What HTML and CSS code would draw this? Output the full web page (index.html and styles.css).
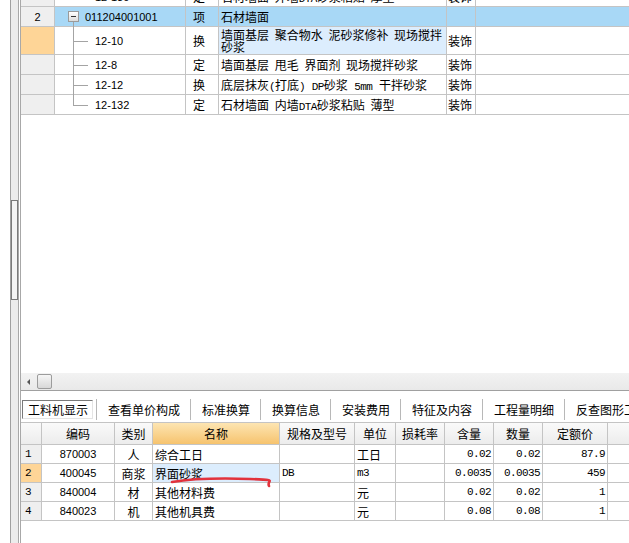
FILE: index.html
```html
<!DOCTYPE html>
<html lang="zh-CN">
<head>
<meta charset="utf-8">
<title>工料机显示</title>
<link rel="stylesheet" href="styles.css">
</head>
<body>
<div class="app">
  <div class="side">
    <div class="side-pad"></div>
    <div class="vscroll"><div class="vthumb"></div></div>
    <div class="side-gap"></div>
  </div>
  <div class="main">
    <div class="tgrid">
      <div class="tr partial">
        <div class="c num"></div>
        <div class="c code">12-130</div>
        <div class="c typ">定</div>
        <div class="c nm"><span class="t">石材墙面 外墙<span class="a">DTA</span>砂浆粘贴 厚型</span></div>
        <div class="c cat">装饰</div>
        <div class="c rest"></div>
      </div>
      <div class="tr item">
        <div class="c num">2</div>
        <div class="c code"><span class="tog"></span>011204001001</div>
        <div class="c typ">项</div>
        <div class="c nm"><span class="t">石材墙面</span></div>
        <div class="c cat"></div>
        <div class="c rest"></div>
      </div>
      <div class="tr child tall">
        <div class="c num cur"></div>
        <div class="c code">12-10</div>
        <div class="c typ">换</div>
        <div class="c nm wrap curcell"><span class="t">墙面基层 聚合物水 泥砂浆修补 现场搅拌<br>砂浆</span></div>
        <div class="c cat">装饰</div>
        <div class="c rest"></div>
      </div>
      <div class="tr child">
        <div class="c num"></div>
        <div class="c code">12-8</div>
        <div class="c typ">定</div>
        <div class="c nm"><span class="t">墙面基层 甩毛 界面剂 现场搅拌砂浆</span></div>
        <div class="c cat">装饰</div>
        <div class="c rest"></div>
      </div>
      <div class="tr child">
        <div class="c num"></div>
        <div class="c code">12-12</div>
        <div class="c typ">换</div>
        <div class="c nm"><span class="t">底层抹灰<span class="a">(</span>打底<span class="a">) DP</span>砂浆<span class="a"> 5mm </span>干拌砂浆</span></div>
        <div class="c cat">装饰</div>
        <div class="c rest"></div>
      </div>
      <div class="tr child last">
        <div class="c num"></div>
        <div class="c code">12-132</div>
        <div class="c typ">定</div>
        <div class="c nm"><span class="t">石材墙面 内墙<span class="a">DTA</span>砂浆粘贴 薄型</span></div>
        <div class="c cat">装饰</div>
        <div class="c rest"></div>
      </div>
    </div>
    <div class="hscroll">
      <span class="harrow"></span>
      <span class="hthumb"></span>
    </div>
    <div class="tabs">
      <div class="tab sel"><span>工料机显示</span></div>
      <div class="tab">查看单价构成</div>
      <div class="tab">标准换算</div>
      <div class="tab">换算信息</div>
      <div class="tab">安装费用</div>
      <div class="tab">特征及内容</div>
      <div class="tab">工程量明细</div>
      <div class="tab">反查图形工程量</div>
    </div>
    <div class="bgrid">
      <div class="br head">
        <div class="c"></div>
        <div class="c">编码</div>
        <div class="c">类别</div>
        <div class="c hl">名称</div>
        <div class="c">规格及型号</div>
        <div class="c">单位</div>
        <div class="c">损耗率</div>
        <div class="c">含量</div>
        <div class="c">数量</div>
        <div class="c">定额价</div>
        <div class="c"></div>
      </div>
      <div class="br">
        <div class="c rn">1</div>
        <div class="c cd">870003</div>
        <div class="c ct">人</div>
        <div class="c tx">综合工日</div>
        <div class="c tx"></div>
        <div class="c tx">工日</div>
        <div class="c"></div>
        <div class="c nu">0.02</div>
        <div class="c nu">0.02</div>
        <div class="c nu">87.9</div>
        <div class="c"></div>
      </div>
      <div class="br">
        <div class="c rn cur">2</div>
        <div class="c cd">400045</div>
        <div class="c ct">商浆</div>
        <div class="c tx curcell">界面砂浆</div>
        <div class="c tx a">DB</div>
        <div class="c tx a">m3</div>
        <div class="c"></div>
        <div class="c nu">0.0035</div>
        <div class="c nu">0.0035</div>
        <div class="c nu">459</div>
        <div class="c"></div>
      </div>
      <div class="br">
        <div class="c rn">3</div>
        <div class="c cd">840004</div>
        <div class="c ct">材</div>
        <div class="c tx">其他材料费</div>
        <div class="c tx"></div>
        <div class="c tx">元</div>
        <div class="c"></div>
        <div class="c nu">0.02</div>
        <div class="c nu">0.02</div>
        <div class="c nu">1</div>
        <div class="c"></div>
      </div>
      <div class="br">
        <div class="c rn">4</div>
        <div class="c cd">840023</div>
        <div class="c ct">机</div>
        <div class="c tx">其他机具费</div>
        <div class="c tx"></div>
        <div class="c tx">元</div>
        <div class="c"></div>
        <div class="c nu">0.08</div>
        <div class="c nu">0.08</div>
        <div class="c nu">1</div>
        <div class="c"></div>
      </div>
    </div>
  </div>
</div>
<svg class="mark" width="629" height="543" viewBox="0 0 629 543">
  <path d="M172 482 C190 479 220 478 250 479 S266 480 269 486" fill="none" stroke="#e2323c" stroke-width="2.6" stroke-linecap="round"/>
</svg>
</body>
</html>
```

FILE: styles.css
```css
html, body {
  margin: 0;
  padding: 0;
}
body {
  width: 629px;
  height: 543px;
  overflow: hidden;
  position: relative;
  background: #fff;
  color: #000;
  font-family: "Noto Sans CJK SC", "Liberation Sans", sans-serif;
  font-size: 12px;
}

.app {
  display: flex;
  height: 543px;
}

/* left pane edge with its vertical scrollbar */
.side {
  display: flex;
  flex: none;
  width: 20px;
}
.side-pad {
  width: 10px;
  background: #fff;
}
.vscroll {
  width: 7px;
  border-left: 1px solid #a0a0a0;
  border-right: 1px solid #a8a8a8;
  background: #ececec;
  padding-top: 200px;
  box-sizing: content-box;
}
.vthumb {
  width: 5px;
  height: 98px;
  border: 1px solid #7a7a7a;
  background: #f4f4f4;
  box-sizing: content-box;
}
.side-gap {
  width: 1px;
  background: #fff;
}

.main {
  flex: 1;
  min-width: 0;
  display: flex;
  flex-direction: column;
  border-left: 1px solid #a8a8a8;
}

/* ---------- top grid ---------- */
.tgrid {
  height: 373px;
  overflow: hidden;
  background: #fff;
}
.tr {
  display: grid;
  grid-template-columns: 34px 131px 33px 228px 29px 1fr;
  height: 20px;
}
.tr.partial {
  margin-top: -13px;
}
.tr.tall {
  height: 28px;
}
.c {
  box-sizing: border-box;
  border-right: 1px solid #c4c4c4;
  border-bottom: 1px solid #c4c4c4;
  display: flex;
  align-items: center;
  white-space: nowrap;
  overflow: hidden;
}
.num {
  background: #efefef;
  justify-content: center;
  font-family: "Liberation Sans", sans-serif;
  font-size: 11px;
}
.num.cur {
  background: #fed597;
}
.code {
  position: relative;
  overflow: visible;
  font-family: "Liberation Sans", sans-serif;
  font-size: 11px;
}
.partial .code {
  padding-left: 40px;
}
.typ {
  padding-left: 7px;
}
.nm {
  padding: 0 3px 0 2px;
}
.nm .t {
  display: block;
  word-spacing: 3px;
}
.nm.wrap {
  white-space: normal;
}
.nm.wrap .t {
  line-height: 12px;
}
.cat {
  padding: 0 1px;
}
.rest {
  border-right: none;
}
.a {
  font-family: "Liberation Mono", monospace;
  font-size: 11px;
  letter-spacing: -0.6px;
}
.nm .a {
  word-spacing: 0.6px;
}

.item .c:not(.num) {
  background: #a8d8f6;
}
.curcell {
  background: #dcedfd;
}

.tog {
  position: relative;
  flex: none;
  width: 9px;
  height: 9px;
  margin: 0 6px 0 13px;
  border: 1px solid #9a9a9a;
  background: linear-gradient(#ffffff, #dcdcdc);
}
.tog::before {
  content: "";
  position: absolute;
  left: 2px;
  top: 4px;
  width: 5px;
  height: 1px;
  background: #333;
}
.item .code::after {
  content: "";
  position: absolute;
  left: 18px;
  top: 15px;
  bottom: -1px;
  border-left: 1px solid #a4a4a4;
}
.child .code {
  padding-left: 40px;
}
.child .code::before {
  content: "";
  position: absolute;
  left: 18px;
  top: 0;
  bottom: -1px;
  border-left: 1px solid #a4a4a4;
}
.child.last .code::before {
  bottom: 50%;
}
.child .code::after {
  content: "";
  position: absolute;
  left: 18px;
  top: 50%;
  width: 15px;
  border-top: 1px solid #a4a4a4;
}

/* ---------- horizontal scrollbar ---------- */
.hscroll {
  height: 17px;
  flex: none;
  display: flex;
  align-items: center;
  background: linear-gradient(#f2f2f2, #e9e9e9);
  border-bottom: 1px solid #a0a0a0;
}
.harrow {
  width: 0;
  height: 0;
  margin: 0 7px 0 6px;
  border-top: 3px solid transparent;
  border-bottom: 3px solid transparent;
  border-right: 3px solid #555;
}
.hthumb {
  width: 13px;
  height: 13px;
  border: 1px solid #9c9c9c;
  border-radius: 2px;
  background: linear-gradient(#f6f6f6, #d8d8d8);
}

/* ---------- tabs ---------- */
.tabs {
  flex: none;
  display: flex;
  height: 31px;
  padding-top: 8px;
  box-sizing: border-box;
  overflow: hidden;
  background: #fff;
}
.tab {
  flex: none;
  height: 21px;
  display: flex;
  align-items: center;
  padding: 0 10px 0 11px;
  border-right: 1px solid #b8b8b8;
  white-space: nowrap;
}
.tab.sel {
  padding: 0 3px 0 1px;
}
.tab.sel span {
  display: flex;
  align-items: center;
  height: 17px;
  padding: 0 4px 0 5px;
  border: 1px solid;
  border-color: #7a7a7a #e4e4e4 #e4e4e4 #7a7a7a;
}

/* ---------- bottom grid ---------- */
.bgrid {
  flex: 1;
  overflow: hidden;
  border-top: 1px solid #c4c4c4;
}
.br {
  display: grid;
  grid-template-columns: 21px 73px 38px 127px 75px 41px 49px 49px 49px 65px 60px;
  height: 19px;
}
.br.head {
  height: 22px;
}
.head .c {
  justify-content: center;
  background: linear-gradient(#fafafa, #ececec);
}
.head .c.hl {
  background: linear-gradient(#fde5b2, #f6c36e);
}
.rn {
  background: #efefef;
  padding-left: 4px;
  font-family: "Liberation Mono", monospace;
  font-size: 11px;
  letter-spacing: -0.6px;
}
.rn.cur {
  background: #fed597;
}
.cd {
  justify-content: center;
  font-family: "Liberation Sans", sans-serif;
  font-size: 11px;
}
.ct {
  justify-content: center;
}
.tx {
  padding-left: 2px;
}
.nu {
  justify-content: flex-end;
  padding-right: 2px;
  font-family: "Liberation Mono", monospace;
  font-size: 11px;
  letter-spacing: -0.6px;
}

/* hand-drawn red mark over the grid */
.mark {
  position: absolute;
  left: 0;
  top: 0;
  pointer-events: none;
}
```
